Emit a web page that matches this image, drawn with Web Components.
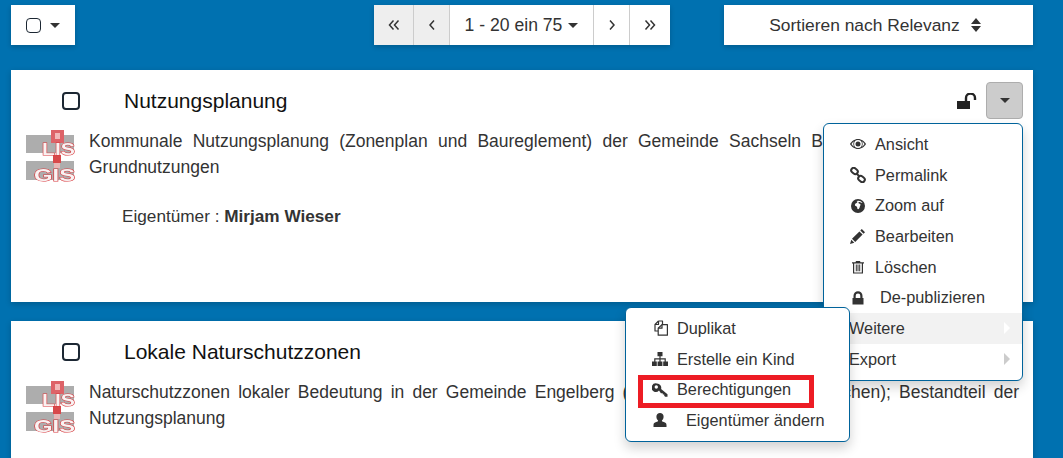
<!DOCTYPE html>
<html lang="de">
<head>
<meta charset="utf-8">
<title>Suchergebnisse</title>
<style>
    html, body {
        margin: 0;
        height: 458px;
        overflow: hidden;
        background: #0071b0;
        font-family: "Liberation Sans", Arial, sans-serif;
        font-size: 16.3px;
        color: #333;
    }
</style>
</head>
<body>
<search-page>
    <search-toolbar></search-toolbar>

    <result-card heading="Nutzungsplanung" actions>
        Kommunale Nutzungsplanung (Zonenplan und Baureglement) der Gemeinde Sachseln Bauzonen Gewässerraum Grundnutzungen
        <span slot="owner">Eigentümer : <b>Mirjam Wieser</b></span>
    </result-card>

    <result-card heading="Lokale Naturschutzzonen">
        Naturschutzzonen lokaler Bedeutung in der Gemeinde Engelberg (Schutzgebiete und Kleinflächen); Bestandteil der Nutzungsplanung
    </result-card>

    <drop-menu style="left: 823px; top: 123px; width: 200px">
        <menu-row icon="eye">Ansicht</menu-row>
        <menu-row icon="link">Permalink</menu-row>
        <menu-row icon="globe">Zoom auf</menu-row>
        <menu-row icon="pencil">Bearbeiten</menu-row>
        <menu-row icon="trash">Löschen</menu-row>
        <menu-row icon="lock" style="--gap: 14px">De-publizieren</menu-row>
        <menu-row sub active>Weitere</menu-row>
        <menu-row sub>Export</menu-row>
    </drop-menu>

    <drop-menu style="left: 625px; top: 307px; width: 225px">
        <menu-row icon="copy">Duplikat</menu-row>
        <menu-row icon="sitemap">Erstelle ein Kind</menu-row>
        <menu-row icon="key">Berechtigungen</menu-row>
        <menu-row icon="user" style="--gap: 18px">Eigentümer ändern</menu-row>
        <red-mark></red-mark>
    </drop-menu>
</search-page>

<script>
const ICONS = {
    eye: '<path fill-rule="evenodd" d="M8 3C4.400 3 1.400 5.600 0 8c1.400 2.400 4.400 5 8 5s6.600-2.600 8-5c-1.400-2.400-4.400-5-8-5zm0 8.900A3.900 3.900 0 1 1 8 4.100a3.900 3.900 0 0 1 0 7.800zM1.500 8c.6-1 1.500-2 2.500-2.700-.9 1.700-.9 3.700 0 5.400C3 10 2.100 9 1.500 8zm10.500 2.700c.9-1.700.9-3.700 0-5.400 1 .7 1.900 1.700 2.500 2.700-.6 1-1.500 2-2.500 2.700z"/><circle cx="8" cy="8" r="2.500"/>',
    link: '<g fill="none" stroke="currentColor" stroke-width="2"><rect x="1" y="1.500" width="7" height="5" rx="2.500" transform="rotate(40 4.500 4)"/><rect x="8" y="9.500" width="7" height="5" rx="2.500" transform="rotate(40 11.500 12)"/><path d="M6.500 6.500l3 3"/></g>',
    globe: '<path fill-rule="evenodd" d="M8 1a7 7 0 1 0 0 14A7 7 0 0 0 8 1zm4.600 3.600c-.7.300-1.300.2-2-.2-.6-.4-1.500-.5-2-.1-.4.300-.1 1 .4 1.200.8.300 1.500.5 1.500 1.300 0 .9-.6 1.200-.7 2-.1.900-.8 2.300-1.700 2.500-.8.100-.9-1.400-1-2.200-.1-.7-1.400-.7-1.900-1.300-.5-.7-.2-1.700.4-2.300.6-.6 1.400-.5 1.700-1.300.2-.6-.3-1-.9-1.100a5.600 5.600 0 0 1 6.200 1.700z"/>',
    pencil: '<path d="M11.800 1l3.200 3.200-1.500 1.500-3.200-3.200zM9.400 3.400l3.200 3.200-7.400 7.400L2 10.800zM1.300 11.700l3 3-4.300 1.300z"/>',
    trash: '<path fill-rule="evenodd" d="M6 2h4l.5 1.200H14v1.200h-1V14.500H3V4.400H2V3.200h3.500zM4.200 4.400v9h7.600v-9zM5.800 5.600h1v6.600h-1zm3.400 0h1v6.600h-1zM7.500 5.600h1v6.600h-1z"/>',
    lock: '<path fill-rule="evenodd" d="M3.500 8V5.800a4.500 4.500 0 0 1 9 0V8h1v6.500h-11V8zm2.200 0h4.600V5.800a2.300 2.300 0 0 0-4.600 0z"/>',
    unlock: '<path d="M0 8h13v8H0z"/><path fill="none" stroke="currentColor" stroke-width="2.400" d="M9 8V5a4.500 4.500 0 0 1 9 0v2"/>',
    copy: '<g fill="none" stroke="currentColor" stroke-width="1.200" stroke-linejoin="round"><path d="M6.500 1H10.500v3M6.500 1L3 4.500V11h3"/><path d="M3 4.500h3.500V1"/><path d="M10 4.600h5.400V15.200H6.200V8.200z"/><path d="M6.200 8.200H10V4.600"/></g>',
    sitemap: '<path d="M5.500 1h5v4.200H8.600v2h5.200v3.300H16V15h-4.800v-4.500h1.400V8.400H8.600v2.100H10.400V15H5.600v-4.500h1.800V8.400H3.400v2.100h1.400V15H0v-4.500h2.200V7.200h5.200v-2H5.500z"/>',
    key: '<path fill-rule="evenodd" d="M5 1.500a4.300 4.300 0 0 1 4.100 5.500l6.400 5.300v2.400h-2.400l-.9-.9v-1.300h-1.400l-.1-1.300H8.900L7 8.600A4.300 4.300 0 1 1 5 1.500zM4.300 3.300a1.700 1.700 0 1 0 0 3.400 1.700 1.700 0 0 0 0-3.400z"/>',
    user: '<path d="M8 1a3.600 3.600 0 0 1 3.600 3.800c0 1.500-.7 3-1.700 3.700 0 .9.500 1 2 1.600 1.500.6 2.600 1.300 2.600 2.900V15h-13v-2c0-1.600 1.100-2.300 2.600-2.900 1.500-.6 2-.7 2-1.600-1-.7-1.700-2.200-1.700-3.700A3.600 3.600 0 0 1 8 1z"/>'
}

class UiIcon extends HTMLElement {
    connectedCallback() {
        const size = this.getAttribute('size') || 16
        const box = this.getAttribute('name') == 'unlock' ? '0 0 20 16' : '0 0 16 16'
        const width = this.getAttribute('name') == 'unlock' ? size * 1.25 : size
        this.attachShadow({ mode: 'open' }).innerHTML = `
            <style>
                :host { display: inline-flex; color: inherit; }
                svg { display: block; fill: currentColor; }
            </style>
            <svg width="${width}" height="${size}" viewBox="${box}">${ICONS[this.getAttribute('name')]}</svg>
        `
    }
}
customElements.define('ui-icon', UiIcon)

class CaretDown extends HTMLElement {
    constructor() {
        super()
        this.attachShadow({ mode: 'open' }).innerHTML = `
            <style>
                :host {
                    display: inline-block;
                    width: 0;
                    height: 0;
                    border-top: 5px solid #333;
                    border-left: 5px solid transparent;
                    border-right: 5px solid transparent;
                }
            </style>
        `
    }
}
customElements.define('caret-down', CaretDown)

class CheckBox extends HTMLElement {
    constructor() {
        super()
        this.attachShadow({ mode: 'open' }).innerHTML = `
            <style>
                :host {
                    display: block;
                    box-sizing: border-box;
                    width: var(--box-size, 18px);
                    height: var(--box-size, 18px);
                    border: 2px solid #1c2733;
                    border-radius: 4px;
                    background: #fff;
                }
            </style>
        `
    }
}
customElements.define('check-box', CheckBox)

class SearchPage extends HTMLElement {
    constructor() {
        super()
        this.attachShadow({ mode: 'open' }).innerHTML = `
            <style>
                :host {
                    display: flex;
                    flex-direction: column;
                    gap: 19px;
                    position: relative;
                    padding: 5px 30px 0 11px;
                    height: 453px;
                    overflow: hidden;
                }
            </style>
            <slot></slot>
        `
    }
}
customElements.define('search-page', SearchPage)

class SearchToolbar extends HTMLElement {
    constructor() {
        super()
        this.attachShadow({ mode: 'open' }).innerHTML = `
            <style>
                :host {
                    display: flex;
                    flex: none;
                    height: 40px;
                    margin-bottom: 6px;
                    color: #333;
                }
                .box {
                    display: flex;
                    align-items: center;
                    justify-content: center;
                    background: #fff;
                    box-shadow: 0 2px 5px rgba(0, 0, 0, .2);
                }
                .select { width: 64px; gap: 9px; --box-size: 15px; }
                .select check-box { border-width: 1.500px; }
                .pager { margin-left: 299px; width: 296px; justify-content: flex-start; align-items: stretch; }
                .pager > div {
                    display: flex;
                    align-items: center;
                    justify-content: center;
                    box-sizing: border-box;
                    border-right: 1px solid #ccc;
                }
                .pager > div:last-child { border-right: 0; }
                .pager .off { background: #eee; }
                .pager svg { fill: none; stroke: #333; stroke-width: 1.500; }
                .first { width: 40px; }
                .prev { width: 36px; }
                .range { width: 144px; gap: 6px; font-size: 17.6px; }
                .next { width: 36px; }
                .last { width: 40px; }
                .sort { margin-left: 54px; width: 309px; gap: 10px; padding-right: 6px; box-sizing: border-box; font-size: 17.4px; }
                .sort svg { fill: #333; display: block; }
            </style>
            <div class="box select"><check-box></check-box><caret-down></caret-down></div>
            <div class="box pager">
                <div class="first off"><svg width="12" height="12" viewBox="0 0 12 12"><path d="M5.500 1.500L1.500 6l4 4.500M10.500 1.500L6.500 6l4 4.500"/></svg></div>
                <div class="prev off"><svg width="8" height="12" viewBox="0 0 8 12"><path d="M6 1.500L2 6l4 4.500"/></svg></div>
                <div class="range"><span>1 - 20 ein 75</span><caret-down></caret-down></div>
                <div class="next"><svg width="8" height="12" viewBox="0 0 8 12"><path d="M2 1.500L6 6l-4 4.500"/></svg></div>
                <div class="last"><svg width="12" height="12" viewBox="0 0 12 12"><path d="M1.500 1.500L5.500 6l-4 4.500M6.500 1.500l4 4.500-4 4.500"/></svg></div>
            </div>
            <div class="box sort"><span>Sortieren nach Relevanz</span>
                <svg width="12" height="16" viewBox="0 0 12 16"><path d="M6 1l5 6H1zM1 9h10l-5 6z"/></svg>
            </div>
        `
    }
}
customElements.define('search-toolbar', SearchToolbar)

class LisLogo extends HTMLElement {
    constructor() {
        super()
        this.attachShadow({ mode: 'open' }).innerHTML = `
            <style>
                :host { display: block; width: 50px; height: 58px; flex: none; }
                svg { display: block; }
                text {
                    font-family: "Liberation Sans", Arial, sans-serif;
                    font-weight: bold;
                    font-size: 16px;
                    fill: #f8f2f2;
                    stroke: #d8383c;
                    stroke-width: 1px;
                    paint-order: stroke;
                }
            </style>
            <svg width="50" height="58" viewBox="0 0 50 58">
                <defs><filter id="soft"><feGaussianBlur stdDeviation=".6"/></filter></defs>
                <g filter="url(#soft)">
                    <rect x="0" y="6" width="48" height="18" fill="#adadad"/>
                    <rect x="0" y="32" width="48" height="19" fill="#adadad"/>
                    <rect x="25" y="1" width="13" height="13" fill="#dd6468"/>
                    <rect x="29" y="4" width="5" height="6" fill="#f2b8b8"/>
                    <rect x="27" y="26" width="8" height="8" fill="#d8484c"/>
                    <rect x="28" y="34" width="6" height="5" fill="#e9b6b6"/>
                    <text x="16" y="26" textLength="33" lengthAdjust="spacingAndGlyphs">LIS</text>
                    <text x="8" y="52" textLength="41" lengthAdjust="spacingAndGlyphs">GIS</text>
                </g>
            </svg>
        `
    }
}
customElements.define('lis-logo', LisLogo)

class ResultCard extends HTMLElement {
    constructor() {
        super()
        this.attachShadow({ mode: 'open' })
    }
    connectedCallback() {
        const actions = this.hasAttribute('actions') ? `
            <div class="actions">
                <ui-icon name="unlock" size="16"></ui-icon>
                <div class="more"><caret-down></caret-down></div>
            </div>` : ''
        this.shadowRoot.innerHTML = `
            <style>
                :host {
                    display: block;
                    box-sizing: border-box;
                    height: 232px;
                    flex: none;
                    padding: 12px 10px 0 15px;
                    background: #fff;
                    box-shadow: 0 2px 6px rgba(0, 0, 0, .2);
                    color: #333;
                }
                header {
                    display: flex;
                    align-items: center;
                    height: 37px;
                    padding-left: 36px;
                }
                h2 {
                    margin: 0 0 0 44px;
                    font-size: 21px;
                    font-weight: normal;
                    color: #111;
                }
                .actions {
                    display: flex;
                    align-items: center;
                    gap: 9px;
                    margin-left: auto;
                    color: #222;
                }
                .more {
                    display: flex;
                    align-items: center;
                    justify-content: center;
                    box-sizing: border-box;
                    width: 37px;
                    height: 37px;
                    background: #ccc;
                    border: 1px solid #adadad;
                    border-radius: 4px;
                }
                .body {
                    display: flex;
                    gap: 13px;
                    margin-top: 10px;
                    padding-right: 4px;
                }
                p {
                    margin: 0;
                    flex: 1;
                    font-size: 17.5px;
                    line-height: 25.600px;
                    text-align: justify;
                }
                .owner { margin: 17px 0 0 96px; font-size: 17.2px; line-height: 25.600px; }
                ::slotted(span) { color: #333; }
            </style>
            <header>
                <check-box></check-box>
                <h2>${this.getAttribute('heading')}</h2>
                ${actions}
            </header>
            <div class="body">
                <lis-logo></lis-logo>
                <p><slot></slot></p>
            </div>
            <div class="owner"><slot name="owner"></slot></div>
        `
    }
}
customElements.define('result-card', ResultCard)

class DropMenu extends HTMLElement {
    constructor() {
        super()
        this.attachShadow({ mode: 'open' }).innerHTML = `
            <style>
                :host {
                    display: block;
                    position: absolute;
                    box-sizing: border-box;
                    padding: 5px 0;
                    background: #fff;
                    border: 1px solid #00639b;
                    border-radius: 6px;
                    box-shadow: 0 6px 12px rgba(0, 0, 0, .18);
                }
            </style>
            <slot></slot>
        `
    }
}
customElements.define('drop-menu', DropMenu)

class MenuRow extends HTMLElement {
    constructor() {
        super()
        this.attachShadow({ mode: 'open' })
    }
    connectedCallback() {
        const icon = this.getAttribute('icon')
        this.shadowRoot.innerHTML = `
            <style>
                :host {
                    display: flex;
                    align-items: center;
                    height: 30.700px;
                    padding-left: ${icon ? 26 : 25}px;
                    color: #333;
                    line-height: 22.800px;
                }
                :host([active]) { background: #f2f2f2; }
                .gap { width: var(--gap, 9px); flex: none; }
                .arrow {
                    margin-left: auto;
                    margin-right: 12px;
                    border-left: 6px solid #ccc;
                    border-top: 6px solid transparent;
                    border-bottom: 6px solid transparent;
                }
                :host([active]) .arrow { border-left-color: #fff; }
            </style>
            ${icon ? `<ui-icon name="${icon}"></ui-icon><span class="gap"></span>` : ''}
            <slot></slot>
            ${this.hasAttribute('sub') ? '<span class="arrow"></span>' : ''}
        `
    }
}
customElements.define('menu-row', MenuRow)

class RedMark extends HTMLElement {
    constructor() {
        super()
        this.attachShadow({ mode: 'open' }).innerHTML = `
            <style>
                :host {
                    position: absolute;
                    left: 12px;
                    top: 67px;
                    box-sizing: border-box;
                    width: 176px;
                    height: 33px;
                    border: 5px solid #ed1c24;
                }
            </style>
        `
    }
}
customElements.define('red-mark', RedMark)
</script>
</body>
</html>
